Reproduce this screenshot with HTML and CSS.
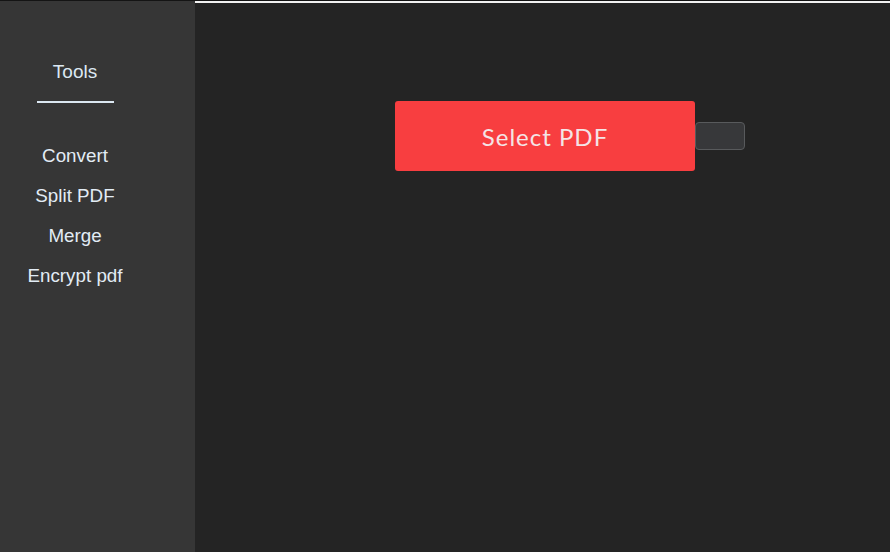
FILE: index.html
```html
<!DOCTYPE html>
<html>
<head>
<meta charset="utf-8">
<link rel="stylesheet" href="styles.css">
</head>
<body>
<div class="app">
  <aside class="sidebar">
    <div class="nav">
      <div class="title">Tools</div>
      <ul class="menu">
        <li>Convert</li>
        <li>Split PDF</li>
        <li>Merge</li>
        <li>Encrypt pdf</li>
      </ul>
    </div>
  </aside>
  <main class="main">
    <div class="actions">
      <button class="select">Select PDF</button>
      <div class="side-box"></div>
    </div>
  </main>
</div>
</body>
</html>
```
FILE: styles.css
```css
html, body {
  margin: 0;
  padding: 0;
  height: 100%;
  background: #242424;
}
body {
  border-top: 1px solid #141414;
  box-sizing: border-box;
  font-family: "Liberation Sans", Arial, sans-serif;
}
.app {
  display: flex;
  height: 551px;
}
.sidebar {
  width: 195px;
  flex: none;
  background: #363636;
}
.nav {
  width: 150px;
  display: flex;
  flex-direction: column;
  align-items: center;
  padding-top: 61px;
}
.title {
  color: #dce8f2;
  font-size: 19px;
  line-height: 20px;
  padding: 0 0 19px;
  width: 77px;
  text-align: center;
  border-bottom: 2px solid #dce8f2;
}
.menu {
  list-style: none;
  margin: 0;
  padding: 0;
  margin-top: 43px;
  display: flex;
  flex-direction: column;
  align-items: center;
  gap: 20px;
}
.menu li {
  color: #e2ecf5;
  font-size: 18.8px;
  line-height: 20px;
  white-space: nowrap;
}
.main {
  flex: 1;
  border-top: 2px solid #f2f2f2;
  background: #242424;
}
.actions {
  display: flex;
  align-items: center;
  margin-left: 200px;
  margin-top: 98px;
}
.select {
  width: 300px;
  height: 70px;
  border: none;
  border-radius: 3px;
  background: #f83e40;
  color: #f4e4e6;
  font-family: "Lato", "Noto Sans", sans-serif;
  font-size: 24px;
  letter-spacing: 1px;
  font-weight: 400;
  padding: 0;
}
.side-box {
  width: 48px;
  height: 26px;
  border: 1px solid #585a5c;
  border-radius: 4px;
  background: #37383a;
}
```
